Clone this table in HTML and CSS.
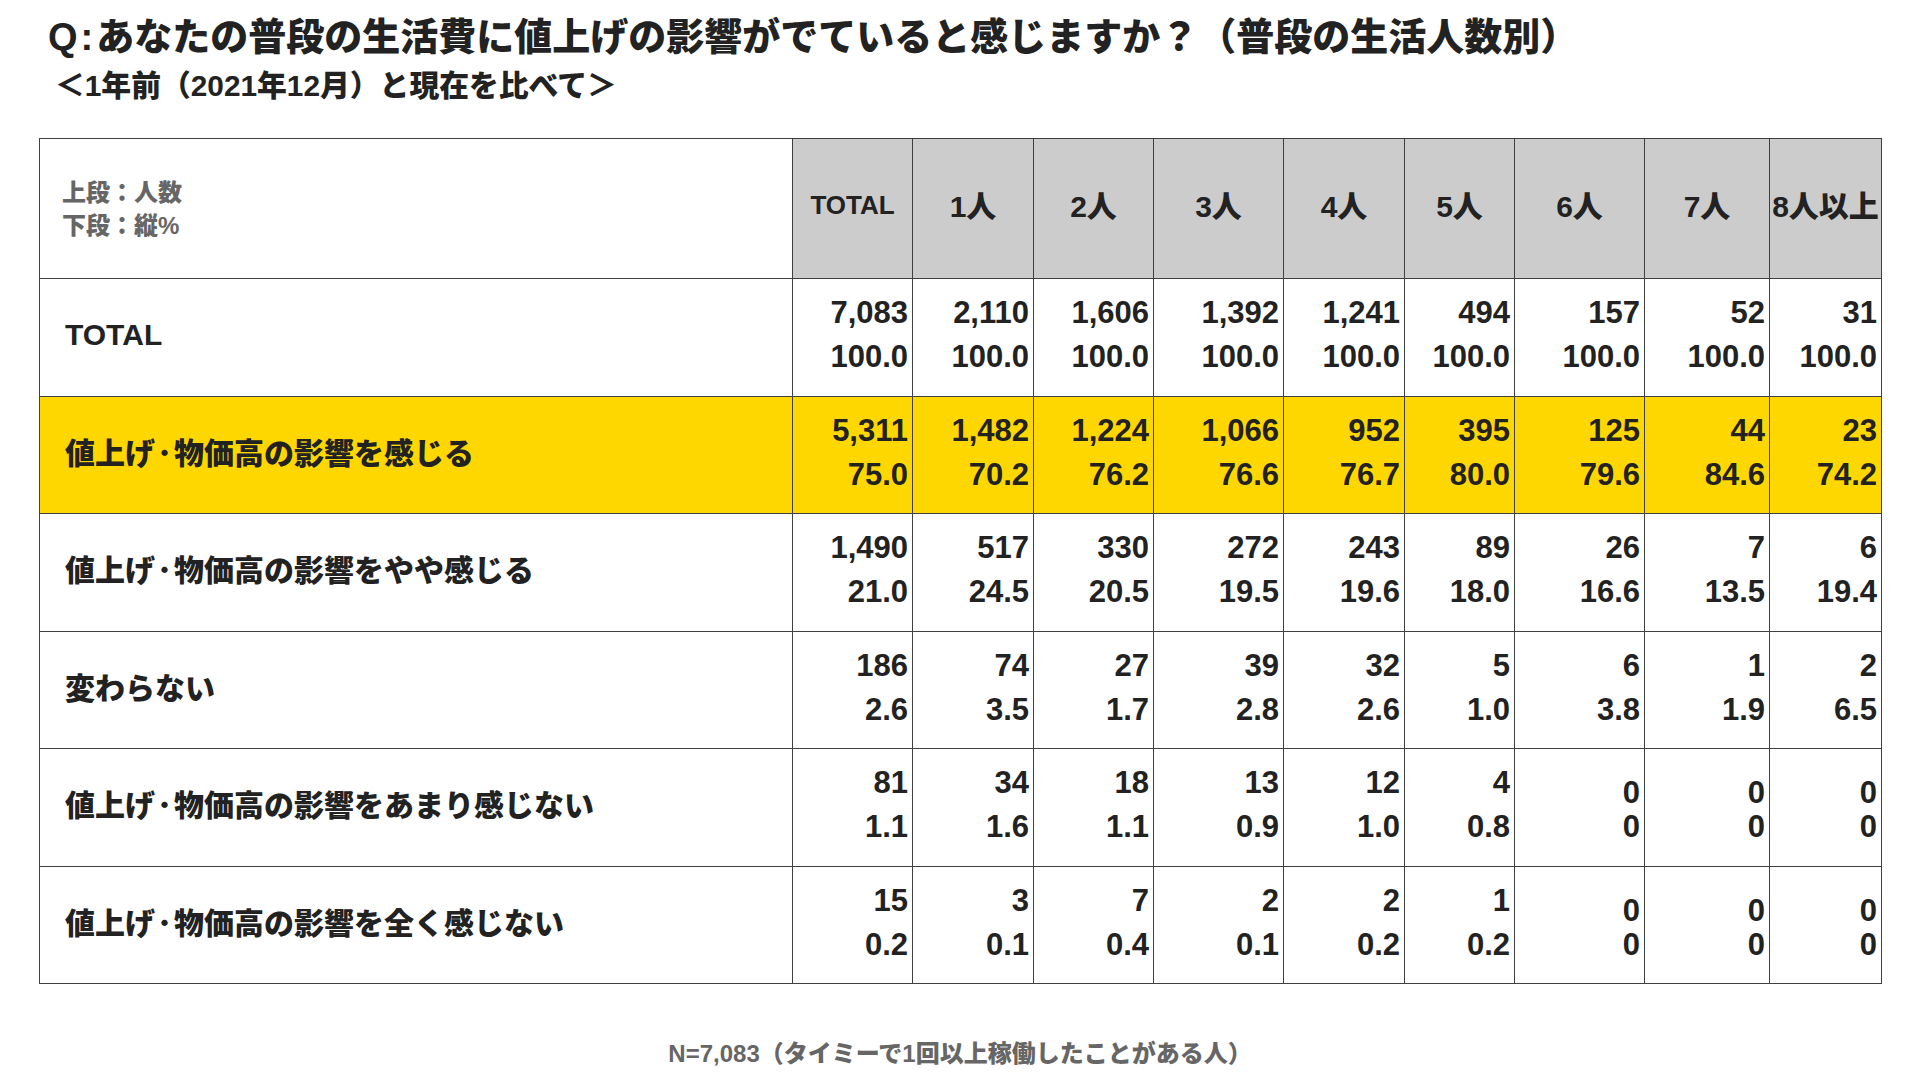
FILE: index.html
```html
<!DOCTYPE html>
<html lang="ja">
<head>
<meta charset="utf-8">
<link rel="stylesheet" href="styles.css">
</head>
<body>
<div class="page">
  <header class="head">
    <h1 class="title"><span class="q">Q:</span>あなたの普段の生活費に値上げの影響がでていると感じますか？（普段の生活人数別）</h1>
    <p class="subtitle">＜1年前（2021年12月）と現在を比べて＞</p>
  </header>
  <table class="tbl">
    <colgroup>
      <col class="c-label"><col class="c-total"><col class="c-1"><col class="c-2"><col class="c-3"><col class="c-4"><col class="c-5"><col class="c-6"><col class="c-7"><col class="c-8">
    </colgroup>
    <thead>
      <tr class="hrow">
        <th class="legend"><span>上段：人数</span><span>下段：縦%</span></th>
        <th class="h h-total">TOTAL</th>
        <th class="h">1人</th>
        <th class="h">2人</th>
        <th class="h">3人</th>
        <th class="h">4人</th>
        <th class="h">5人</th>
        <th class="h">6人</th>
        <th class="h">7人</th>
        <th class="h">8人以上</th>
      </tr>
    </thead>
    <tbody>
      <tr class="row">
        <td class="lbl lbl-en">TOTAL</td>
        <td class="num"><span>7,083</span><span>100.0</span></td>
        <td class="num"><span>2,110</span><span>100.0</span></td>
        <td class="num"><span>1,606</span><span>100.0</span></td>
        <td class="num"><span>1,392</span><span>100.0</span></td>
        <td class="num"><span>1,241</span><span>100.0</span></td>
        <td class="num"><span>494</span><span>100.0</span></td>
        <td class="num"><span>157</span><span>100.0</span></td>
        <td class="num"><span>52</span><span>100.0</span></td>
        <td class="num"><span>31</span><span>100.0</span></td>
      </tr>
      <tr class="row hl">
        <td class="lbl">値上げ<span class="dot">･</span>物価高の影響を感じる</td>
        <td class="num"><span>5,311</span><span>75.0</span></td>
        <td class="num"><span>1,482</span><span>70.2</span></td>
        <td class="num"><span>1,224</span><span>76.2</span></td>
        <td class="num"><span>1,066</span><span>76.6</span></td>
        <td class="num"><span>952</span><span>76.7</span></td>
        <td class="num"><span>395</span><span>80.0</span></td>
        <td class="num"><span>125</span><span>79.6</span></td>
        <td class="num"><span>44</span><span>84.6</span></td>
        <td class="num"><span>23</span><span>74.2</span></td>
      </tr>
      <tr class="row">
        <td class="lbl">値上げ<span class="dot">･</span>物価高の影響をやや感じる</td>
        <td class="num"><span>1,490</span><span>21.0</span></td>
        <td class="num"><span>517</span><span>24.5</span></td>
        <td class="num"><span>330</span><span>20.5</span></td>
        <td class="num"><span>272</span><span>19.5</span></td>
        <td class="num"><span>243</span><span>19.6</span></td>
        <td class="num"><span>89</span><span>18.0</span></td>
        <td class="num"><span>26</span><span>16.6</span></td>
        <td class="num"><span>7</span><span>13.5</span></td>
        <td class="num"><span>6</span><span>19.4</span></td>
      </tr>
      <tr class="row">
        <td class="lbl">変わらない</td>
        <td class="num"><span>186</span><span>2.6</span></td>
        <td class="num"><span>74</span><span>3.5</span></td>
        <td class="num"><span>27</span><span>1.7</span></td>
        <td class="num"><span>39</span><span>2.8</span></td>
        <td class="num"><span>32</span><span>2.6</span></td>
        <td class="num"><span>5</span><span>1.0</span></td>
        <td class="num"><span>6</span><span>3.8</span></td>
        <td class="num"><span>1</span><span>1.9</span></td>
        <td class="num"><span>2</span><span>6.5</span></td>
      </tr>
      <tr class="row">
        <td class="lbl">値上げ<span class="dot">･</span>物価高の影響をあまり感じない</td>
        <td class="num"><span>81</span><span>1.1</span></td>
        <td class="num"><span>34</span><span>1.6</span></td>
        <td class="num"><span>18</span><span>1.1</span></td>
        <td class="num"><span>13</span><span>0.9</span></td>
        <td class="num"><span>12</span><span>1.0</span></td>
        <td class="num"><span>4</span><span>0.8</span></td>
        <td class="num zero"><span>0</span><span>0</span></td>
        <td class="num zero"><span>0</span><span>0</span></td>
        <td class="num zero"><span>0</span><span>0</span></td>
      </tr>
      <tr class="row">
        <td class="lbl">値上げ<span class="dot">･</span>物価高の影響を全く感じない</td>
        <td class="num"><span>15</span><span>0.2</span></td>
        <td class="num"><span>3</span><span>0.1</span></td>
        <td class="num"><span>7</span><span>0.4</span></td>
        <td class="num"><span>2</span><span>0.1</span></td>
        <td class="num"><span>2</span><span>0.2</span></td>
        <td class="num"><span>1</span><span>0.2</span></td>
        <td class="num zero"><span>0</span><span>0</span></td>
        <td class="num zero"><span>0</span><span>0</span></td>
        <td class="num zero"><span>0</span><span>0</span></td>
      </tr>
    </tbody>
  </table>
  <p class="note">N=7,083（タイミーで1回以上稼働したことがある人）</p>
</div>
</body>
</html>
```
FILE: styles.css
```css
html, body {
  margin: 0;
  padding: 0;
  background: #ffffff;
}
body {
  font-family: "Liberation Sans", "Noto Sans CJK JP", sans-serif;
  font-weight: 900;
  color: #222222;
}
.page {
  width: 1920px;
  height: 1080px;
  padding: 15px 0 0 39px;
  box-sizing: border-box;
}
.head {
  margin: 0;
}
.title {
  margin: 0 0 0 9px;
  font-size: 38px;
  line-height: 44px;
  font-weight: 900;
  white-space: nowrap;
  color: #222222;
}
.q {
  letter-spacing: 3px;
}
.subtitle {
  margin: 9px 0 0 16px;
  font-size: 29.8px;
  line-height: 36px;
  white-space: nowrap;
  color: #222222;
}
.tbl {
  margin-top: 34px;
  border-collapse: collapse;
  table-layout: fixed;
  width: 1842px;
}
.c-label { width: 753px; }
.c-total { width: 120px; }
.c-1 { width: 121px; }
.c-2 { width: 120px; }
.c-3 { width: 130px; }
.c-4 { width: 121px; }
.c-5 { width: 110px; }
.c-6 { width: 130px; }
.c-7 { width: 125px; }
.c-8 { width: 112px; }
.tbl th, .tbl td {
  border: 1px solid #404040;
  padding: 0;
}
.hrow {
  height: 140px;
}
.legend {
  background: #ffffff;
  text-align: left;
  padding-left: 22px !important;
  color: #666666;
  font-size: 24px;
  line-height: 33px;
  font-weight: 900;
  vertical-align: middle;
}
.legend span {
  display: block;
}
.h {
  background: #cccccc;
  text-align: center;
  font-size: 30px;
  font-weight: 900;
  color: #222222;
  vertical-align: middle;
  white-space: nowrap;
  padding-bottom: 10px !important;
}
.h-total {
  font-size: 26px;
  padding-bottom: 6px !important;
}
.row {
  height: 117.5px;
}
.hl td {
  background: #ffd700;
}
.lbl {
  font-size: 30px;
  text-align: left;
  padding-left: 25px !important;
  padding-bottom: 8px !important;
  vertical-align: middle;
  white-space: nowrap;
}
.lbl .dot {
  margin: 0 2px;
}
.lbl-en {
  padding-bottom: 5px !important;
}
.num {
  text-align: right;
  font-size: 31px;
  line-height: 44px;
  padding-right: 4px !important;
  padding-bottom: 4px !important;
  vertical-align: middle;
}
.num span {
  display: block;
}
.zero span:first-child {
  margin-top: 10px;
  margin-bottom: -10px;
}
.note {
  margin: 55px 0 0 -39px;
  width: 1920px;
  text-align: center;
  font-size: 24px;
  line-height: 30px;
  color: #666666;
}
```
